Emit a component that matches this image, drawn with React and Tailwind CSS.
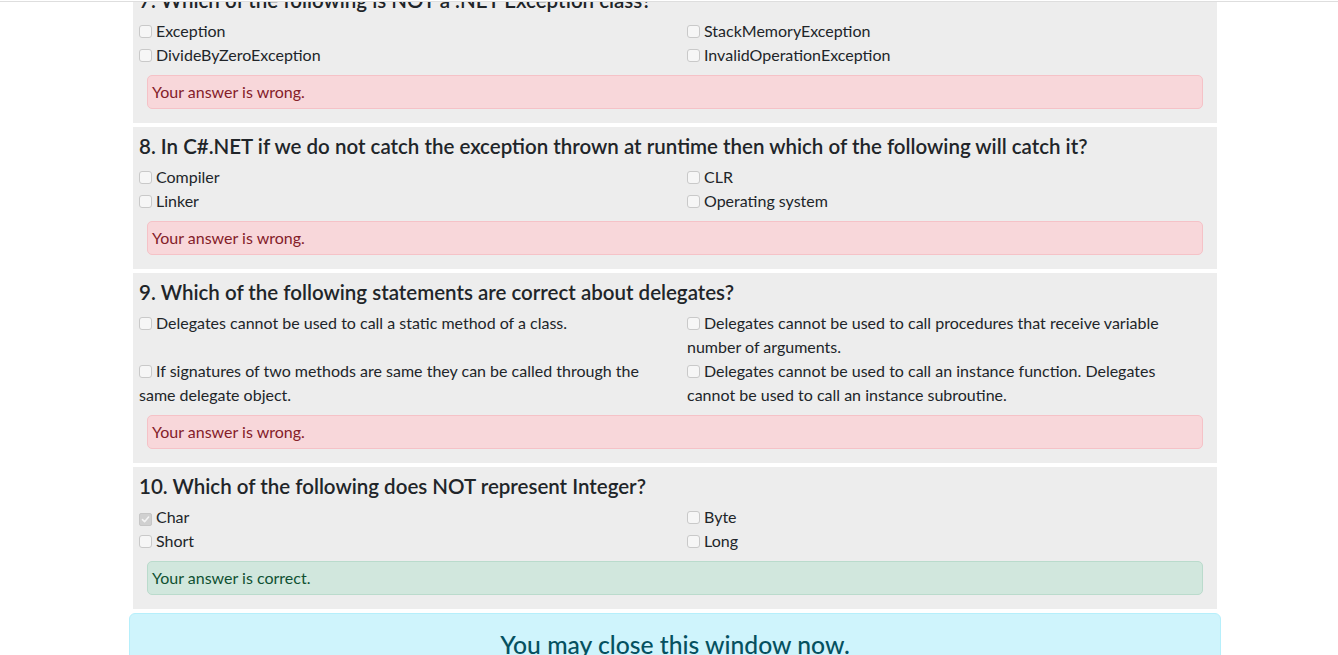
const font = { fontFamily: 'Lato, "Open Sans", sans-serif' };

function Box({ checked }) {
  if (checked) {
    return (
      <span className="inline-flex items-center justify-center w-[13px] h-[13px] rounded-[2px] bg-[#d0d0d0] border border-[#c6c6c6] mr-1 align-[-1px]">
        <svg width="9" height="9" viewBox="0 0 9 9" fill="none">
          <path d="M1.5 4.6 L3.6 6.7 L7.6 2" stroke="#f4f4f4" strokeWidth="1.6" strokeLinecap="round" strokeLinejoin="round" />
        </svg>
      </span>
    );
  }
  return (
    <span className="inline-block w-[13px] h-[13px] rounded-[3px] bg-[#f6f6f6] border border-[#c9c9c9] mr-1 align-[-1px]"></span>
  );
}

function Option({ text, checked }) {
  return (
    <div className="pr-3">
      <Box checked={checked} />
      {text}
    </div>
  );
}

function Card({ title, options, correct }) {
  return (
    <div className="mx-1 bg-[#ededed] pt-[7px] px-[6px] pb-[6px]">
      <h5 className="text-[20.5px] leading-6 font-semibold text-[#212529] mb-[7px] whitespace-nowrap">{title}</h5>
      <div className="grid grid-cols-[548px_1fr] text-[16px] leading-6 text-[#212529]">
        {options.map((o, i) => (
          <Option key={i} text={o.t} checked={o.c} />
        ))}
      </div>
      <div
        className={
          correct
            ? "mx-2 mt-2 mb-2 h-[34px] px-1 py-1 border border-[#badbcc] bg-[#d1e7dd] text-[#0f5132] rounded-[5px] text-[16px] leading-6"
            : "mx-2 mt-2 mb-2 h-[34px] px-1 py-1 border border-[#f5c2c7] bg-[#f8d7da] text-[#842029] rounded-[5px] text-[16px] leading-6"
        }
      >
        {correct ? "Your answer is correct." : "Your answer is wrong."}
      </div>
    </div>
  );
}

export default function App() {
  const cards = [
    {
      title: "7. Which of the following is NOT a .NET Exception class?",
      options: [
        { t: "Exception" },
        { t: "StackMemoryException" },
        { t: "DivideByZeroException" },
        { t: "InvalidOperationException" },
      ],
    },
    {
      title: "8. In C#.NET if we do not catch the exception thrown at runtime then which of the following will catch it?",
      options: [{ t: "Compiler" }, { t: "CLR" }, { t: "Linker" }, { t: "Operating system" }],
    },
    {
      title: "9. Which of the following statements are correct about delegates?",
      options: [
        { t: "Delegates cannot be used to call a static method of a class." },
        { t: "Delegates cannot be used to call procedures that receive variable number of arguments." },
        { t: "If signatures of two methods are same they can be called through the same delegate object." },
        { t: "Delegates cannot be used to call an instance function. Delegates cannot be used to call an instance subroutine." },
      ],
    },
    {
      title: "10. Which of the following does NOT represent Integer?",
      options: [{ t: "Char", c: true }, { t: "Byte" }, { t: "Short" }, { t: "Long" }],
      correct: true,
    },
  ];
  return (
    <div style={font} className="bg-white overflow-hidden h-[655px] relative">
      <div className="fixed top-0 inset-x-0 h-[2px] bg-white border-b border-[#dedede] z-10"></div>
      <div className="ml-[129px] w-[1092px] -mt-[19px] flex flex-col gap-1">
        {cards.map((c, i) => (
          <Card key={i} {...c} />
        ))}
        <div className="p-4 border border-[#b6effb] bg-[#cff4fc] text-[#055160] rounded-[6px]">
          <h4 className="text-[24.7px] leading-[29px] font-medium text-center">You may close this window now.</h4>
        </div>
      </div>
    </div>
  );
}
